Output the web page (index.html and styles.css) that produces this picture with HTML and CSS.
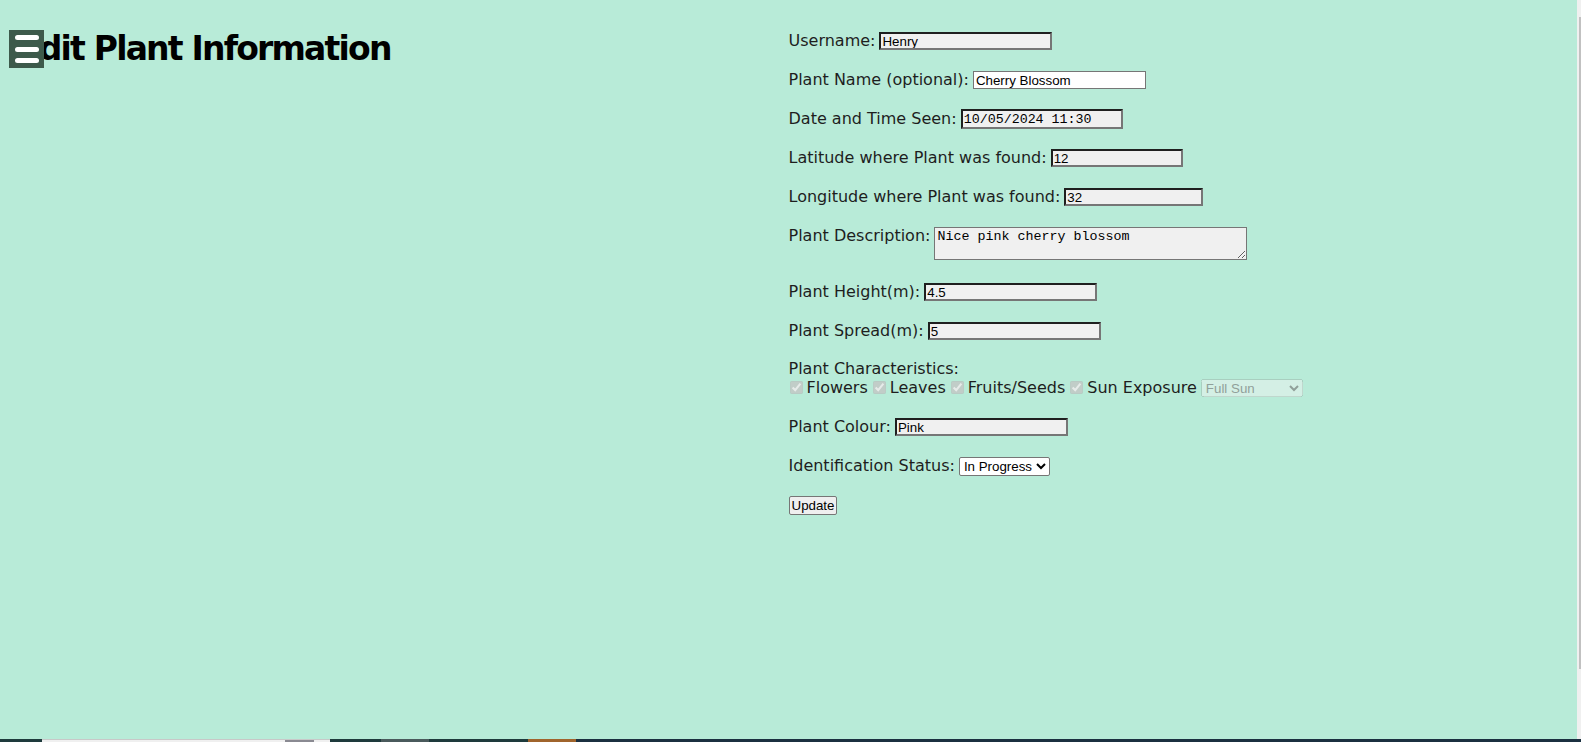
FILE: index.html
```html
<!DOCTYPE html>
<html lang="en">
<head>
<meta charset="utf-8">
<title>Edit Plant Information</title>
<link rel="stylesheet" href="styles.css">
</head>
<body>
<div class="layout">
  <div class="left">
    <button class="menu-btn" aria-label="Menu">
      <span class="bar"></span><span class="bar"></span><span class="bar"></span>
    </button>
    <h1 class="title">Edit Plant Information</h1>
  </div>
  <form class="plant-form">
    <div class="row"><label>Username:</label><input class="field w173" type="text" value="Henry"></div>
    <div class="row"><label>Plant Name (optional):</label><input class="field plain w173" type="text" value="Cherry Blossom"></div>
    <div class="row"><label>Date and Time Seen:</label><input class="field mono date" type="text" value="10/05/2024 11:30"></div>
    <div class="row"><label>Latitude where Plant was found:</label><input class="field w132" type="text" value="12"></div>
    <div class="row"><label>Longitude where Plant was found:</label><input class="field w139" type="text" value="32"></div>
    <div class="row top desc-row"><label>Plant Description:</label><textarea class="field mono desc">Nice pink cherry blossom</textarea></div>
    <div class="row"><label>Plant Height(m):</label><input class="field w173" type="text" value="4.5"></div>
    <div class="row"><label>Plant Spread(m):</label><input class="field w173" type="text" value="5"></div>
    <div class="chars">
      <div class="chars-title">Plant Characteristics:</div>
      <div class="chars-row">
        <input type="checkbox" checked disabled><span>Flowers</span>
        <input type="checkbox" checked disabled><span>Leaves</span>
        <input type="checkbox" checked disabled><span>Fruits/Seeds</span>
        <input type="checkbox" checked disabled><span>Sun Exposure</span>
        <select class="sun" disabled><option>Full Sun</option></select>
      </div>
    </div>
    <div class="row"><label>Plant Colour:</label><input class="field w173" type="text" value="Pink"></div>
    <div class="row"><label>Identification Status:</label><select class="status"><option>In Progress</option><option>Identified</option></select></div>
    <div class="row"><button type="button" class="update">Update</button></div>
  </form>
</div>
<div class="scrollbar"><div class="thumb"></div></div>
<div class="taskbar">
  <span class="seg s1"></span><span class="seg s2"><span class="blob"></span></span><span class="seg s3"></span><span class="seg s4"></span><span class="seg s5"></span><span class="seg s6"></span><span class="seg s7"></span>
</div>
</body>
</html>
```
FILE: styles.css
```css
html, body {
  margin: 0;
  height: 100%;
  overflow: hidden;
  background: #b8ebd8;
}
body {
  font-family: "DejaVu Sans", "Liberation Sans", sans-serif;
  color: #1e1e1e;
}
.layout {
  display: grid;
  grid-template-columns: 1fr 1fr;
  padding: 0 8px;
  margin-right: 4px;
}
.left {
  position: relative;
}
.title {
  margin: 29px 0 0 10px;
  font-family: "DejaVu Sans", sans-serif;
  font-weight: bold;
  font-size: 33px;
  letter-spacing: -1.8px;
  color: #000;
  line-height: 40px;
}
.menu-btn {
  position: absolute;
  left: 1px;
  top: 30px;
  width: 35px;
  height: 38px;
  background: #3d5a4b;
  border: 0;
  padding: 0;
  display: flex;
  flex-direction: column;
  align-items: center;
  justify-content: center;
  gap: 6.5px;
  z-index: 1;
}
.bar {
  display: block;
  width: 24px;
  height: 5px;
  border-radius: 3px;
  background: #fff;
}
.plant-form {
  display: flex;
  flex-direction: column;
  gap: 19px;
  padding-top: 31px;
  font-size: 16px;
}
.row {
  display: flex;
  align-items: center;
  gap: 4px;
  min-height: 20px;
}
.row.top {
  align-items: flex-start;
}
.desc-row {
  margin-bottom: 3px;
}
.row label {
  white-space: nowrap;
  line-height: 20px;
}
.field {
  box-sizing: border-box;
  height: 18px;
  padding: 0 1px;
  font-family: "Liberation Sans", Arial, sans-serif;
  font-size: 13.33px;
  color: #000;
  background: #f0f0f0;
  border: 2px solid;
  border-color: #1f1f1f #767676 #767676 #1f1f1f;
}
.field.plain {
  background: #fff;
  border: 1px solid #767676;
  padding: 0 2px;
}
.w173 { width: 173px; }
.w132 { width: 132px; }
.w139 { width: 139px; }
.mono {
  font-family: "Liberation Mono", monospace;
  font-size: 13.33px;
}
.date {
  width: 162px;
  height: 20px;
}
.desc {
  width: 313px;
  height: 33px;
  margin-top: 1px;
  resize: vertical;
  padding: 1px 2px;
  border: 1px solid #767676;
}
.chars {
  display: flex;
  flex-direction: column;
  margin-bottom: 1px;
}
.chars-title {
  line-height: 18px;
}
.chars-row {
  display: flex;
  align-items: center;
  height: 19px;
}
.chars-row input {
  margin: 0 4px 0 1px;
  width: 13px;
  height: 13px;
}
.chars-row span {
  margin-right: 4px;
}
.sun {
  width: 102px;
  height: 18px;
  font-family: "Liberation Sans", Arial, sans-serif;
  font-size: 13.33px;
  margin-left: 0;
}
.status {
  height: 19px;
  font-family: "Liberation Sans", Arial, sans-serif;
  font-size: 13.33px;
  color: #000;
  background: #fff;
  border: 1px solid #767676;
  border-radius: 2px;
  padding: 0;
}
.update {
  height: 19px;
  padding: 0 2px;
  font-family: "Liberation Sans", Arial, sans-serif;
  font-size: 13.33px;
  color: #000;
  background: #efefef;
  border: 1px solid #767676;
  border-radius: 2px;
}
.scrollbar {
  position: fixed;
  top: 0;
  right: 0;
  bottom: 3px;
  width: 4px;
  background: #f0f0f0;
}
.thumb {
  margin: 17px 0 0 2px;
  width: 2px;
  height: 652px;
  background: #c1c1c1;
}
.taskbar {
  position: fixed;
  left: 0;
  right: 0;
  bottom: 0;
  height: 3px;
  display: flex;
  background: #1b3040;
}
.seg { display: block; height: 3px; }
.s1 { width: 42px; background: #1e3a3c; }
.s2 { width: 288px; background: #f0f0f0; border-top: 1px solid #c8c8c8; box-sizing: border-box; position: relative; }
.blob { position: absolute; right: 16px; top: 0; width: 29px; height: 3px; background: #8a8a92; }
.s3 { width: 51px; background: #1e3a3c; }
.s4 { width: 48px; background: #4a5a5c; }
.s5 { width: 99px; background: #1e3a3c; }
.s6 { width: 48px; background: #a0642c; }
.s7 { flex: 1; background: #1b3040; }
```
